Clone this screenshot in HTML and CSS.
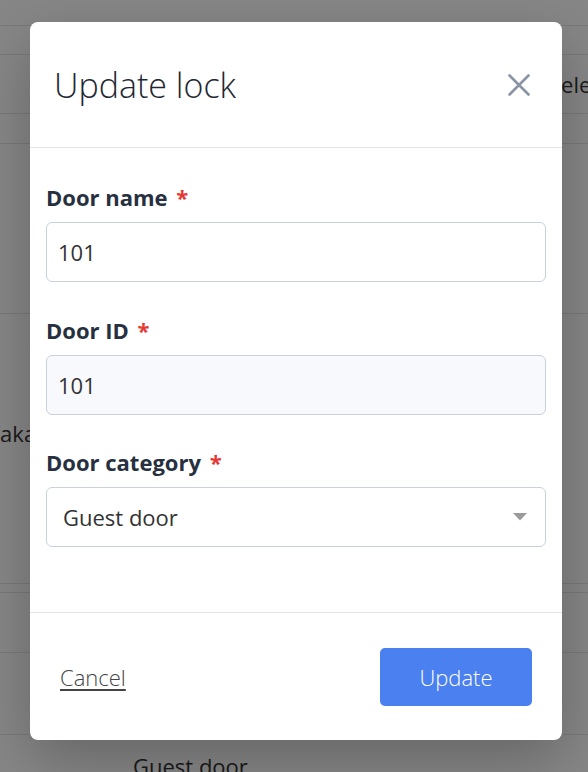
FILE: index.html
```html
<!DOCTYPE html>
<html lang="en">
<head>
<meta charset="utf-8">
<title>Update lock</title>
<link rel="stylesheet" href="styles.css">
</head>
<body>
<div class="page">
  <div class="row r1"></div>
  <div class="row r2"></div>
  <div class="row r3"><span class="bg-text right">Select</span></div>
  <div class="row r4"></div>
  <div class="row r5"></div>
  <div class="row r6"><span class="bg-text left">Takayama</span></div>
  <div class="row r7"></div>
  <div class="row r8"></div>
  <div class="row r9"></div>
  <div class="row r10"><span class="bg-text mid">Guest door</span></div>
</div>
<div class="overlay"></div>
<div class="modal">
  <div class="modal-header">
    <h1 class="modal-title">Update lock</h1>
    <button class="close" aria-label="Close">
      <svg width="22" height="22" viewBox="0 0 22 22"><path d="M1.5 1.5 L20.5 20.5 M20.5 1.5 L1.5 20.5" stroke="#8a94a6" stroke-width="2.6" stroke-linecap="round" fill="none"/></svg>
    </button>
  </div>
  <div class="modal-body">
    <div class="field">
      <label class="label">Door name <span class="req">*</span></label>
      <div class="input">101</div>
    </div>
    <div class="field">
      <label class="label">Door ID <span class="req">*</span></label>
      <div class="input disabled">101</div>
    </div>
    <div class="field">
      <label class="label">Door category <span class="req">*</span></label>
      <div class="input select">
        <span>Guest door</span>
        <svg width="14" height="8" viewBox="0 0 14 8"><path d="M0 0 L14 0 L7 7.5 Z" fill="#9b9b9b"/></svg>
      </div>
    </div>
  </div>
  <div class="modal-footer">
    <a class="cancel" href="#">Cancel</a>
    <button class="primary">Update</button>
  </div>
</div>
</body>
</html>
```
FILE: styles.css
```css
* { box-sizing: border-box; }
html, body { margin: 0; padding: 0; }
body {
  width: 588px;
  height: 772px;
  overflow: hidden;
  position: relative;
  font-family: "Open Sans", "Noto Sans", sans-serif;
  background: #ffffff;
}
.page { display: flex; flex-direction: column; }
.row { border-bottom: 1px solid #e3e6eb; display: flex; align-items: center; position: relative; overflow: hidden; }
.r1 { height: 26px; }
.r2 { height: 29px; }
.r3 { height: 59px; }
.r4 { height: 30px; }
.r5 { height: 170px; }
.r6 { height: 270px; }
.r7 { height: 9px; }
.r8 { height: 60px; }
.r9 { height: 82px; }
.r10 { height: 60px; border-bottom: none; align-items: flex-start; }
.bg-text { font-size: 22px; color: #333; white-space: nowrap; }
.bg-text.right { margin-left: 549px; }
.bg-text.left { margin-left: -12px; margin-top: -32px; }
.bg-text.mid { margin-left: 133px; margin-top: 16px; }

.overlay {
  position: absolute;
  inset: 0;
  background: rgba(0, 0, 0, 0.47);
}
.modal {
  position: absolute;
  left: 30px;
  top: 22px;
  width: 532px;
  height: 718px;
  background: #fff;
  border-radius: 8px;
  box-shadow: 0 20px 60px rgba(0, 0, 0, 0.25);
  display: flex;
  flex-direction: column;
}
.modal-header {
  display: flex;
  align-items: center;
  justify-content: space-between;
  padding: 40px 32px 39px 24px;
  border-bottom: 1px solid #e2e6ea;
}
.modal-title {
  margin: 0;
  font-size: 34px;
  font-weight: 300;
  line-height: 46px;
  color: #1f2733;
}
.close {
  border: 0;
  background: none;
  padding: 0;
  width: 22px;
  height: 22px;
  display: flex;
}
.modal-body {
  flex: 1;
  padding: 34px 16px 0 16px;
  display: flex;
  flex-direction: column;
  gap: 32.5px;
}
.field { display: flex; flex-direction: column; gap: 10px; }
.label {
  font-size: 22px;
  font-weight: 700;
  line-height: 30px;
  color: #27303f;
}
.req { color: #e53935; margin-left: 3px; }
.input {
  height: 60px;
  border: 1px solid #c9d1dd;
  border-radius: 6px;
  padding: 0 12px 0 11px;
  display: flex;
  align-items: center;
  font-size: 22px;
  color: #333;
  background: #fff;
}
.input.disabled { background: #f7f9fc; }
.input.select {
  justify-content: space-between;
  padding: 0 18px 0 16px;
}
.modal-footer {
  border-top: 1px solid #e2e6ea;
  height: 128px;
  padding: 0 30px;
  display: flex;
  align-items: center;
  justify-content: space-between;
}
.cancel {
  font-size: 22px;
  font-weight: 300;
  color: #444;
  text-decoration: underline;
  text-underline-offset: 3px;
  text-decoration-thickness: 2px;
}
.primary {
  width: 152px;
  height: 58px;
  border: 0;
  border-radius: 5px;
  background: #4a80ef;
  color: #fff;
  font-family: inherit;
  font-size: 22px;
  font-weight: 300;
}
```
